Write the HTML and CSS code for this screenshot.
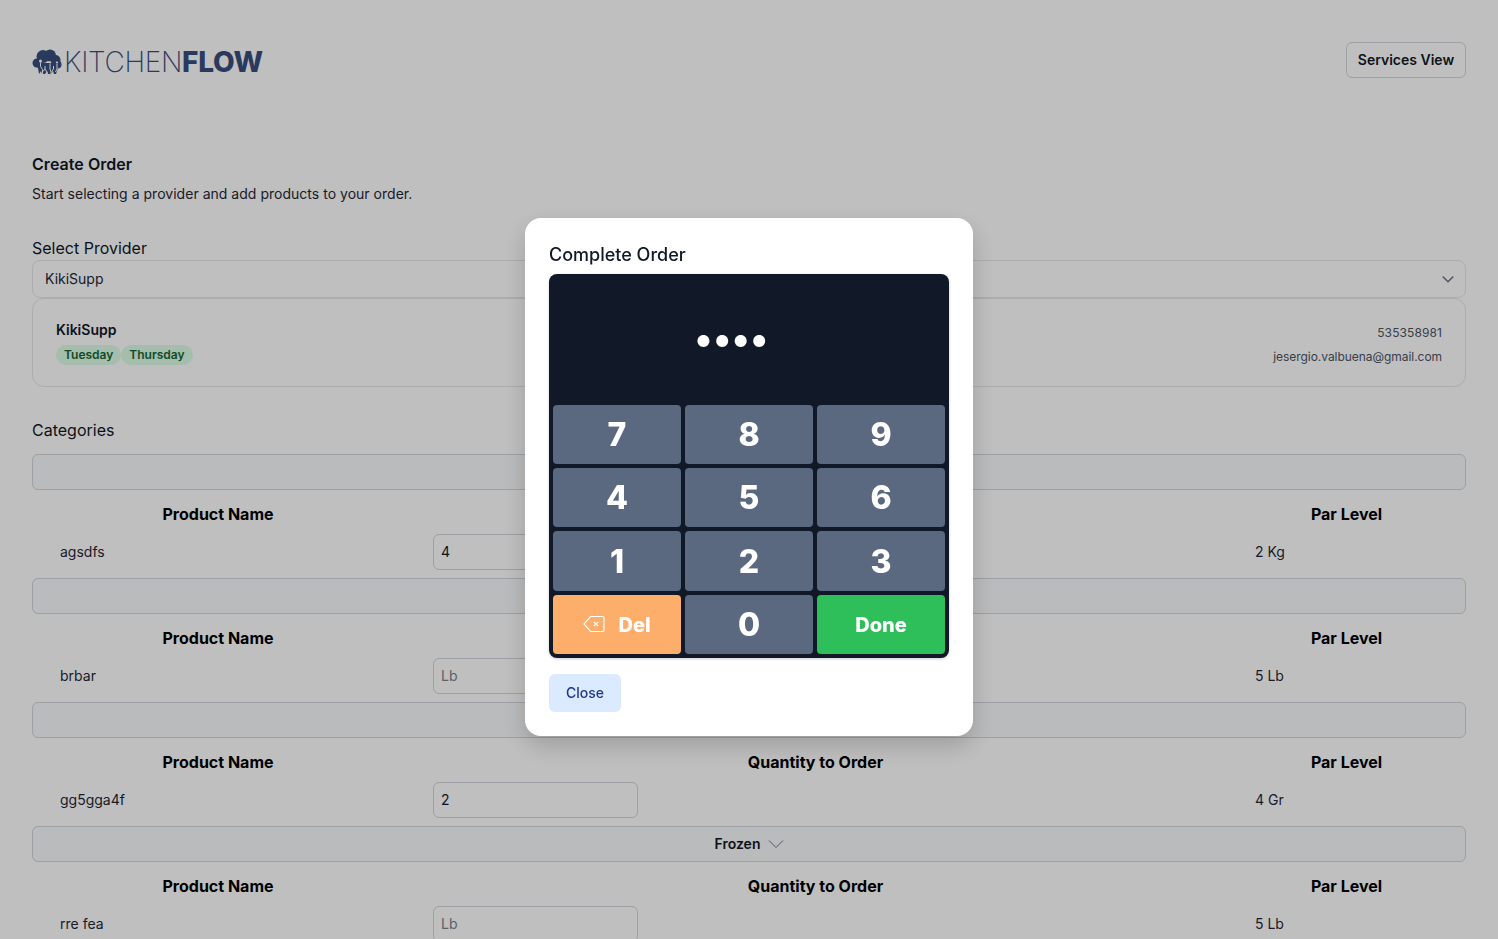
FILE: index.html
```html
<!DOCTYPE html>
<html lang="en">
<head>
<meta charset="utf-8">
<title>KitchenFlow - Create Order</title>
<link rel="stylesheet" href="styles.css">
</head>
<body>
<main class="page">
  <header class="topbar">
    <div class="logo">
      <svg class="logo-mark" viewBox="0 0 30 26" width="30" height="26" aria-hidden="true">
        <g class="logo-cloud">
          <circle cx="5" cy="14" r="4.500"/>
          <circle cx="11" cy="7.500" r="6.500"/>
          <circle cx="18" cy="6.500" r="6"/>
          <circle cx="23.500" cy="11" r="5"/>
          <circle cx="25.500" cy="15.500" r="4"/>
          <path d="M4 14h22v5l-2 6h-2l-1-3-2 3h-3l-1-3-2 3h-3l-1-3-2 3H7l-1-6-2-1z"/>
        </g>
        <path class="logo-lines" d="M8.500 13.500v4l2 3v5M13 17v3l-2 2.500M13 20l2 3v2.500M18 15v5l1 3v2.500M21.500 17v3l-2 3M25 15v5l-1.500 3"/>
        <circle class="logo-node" cx="8.500" cy="12" r="1.500"/>
        <circle class="logo-node" cx="18" cy="13.500" r="1.100"/>
        <circle class="logo-node" cx="25" cy="13.500" r="1.100"/>
      </svg>
      <span class="logo-text"><span class="logo-thin">KITCHEN</span><span class="logo-bold">FLOW</span></span>
    </div>
    <button class="btn-outline" type="button">Services View</button>
  </header>

  <section class="intro">
    <h1>Create Order</h1>
    <p>Start selecting a provider and add products to your order.</p>
  </section>

  <section class="provider">
    <label class="field-label" for="provider">Select Provider</label>
    <div class="select" id="provider">
      <span>KikiSupp</span>
      <svg viewBox="0 0 20 20" width="20" height="20" aria-hidden="true"><path d="M4.700 7.500l5.300 5.300 5.300-5.300"/></svg>
    </div>
    <div class="provider-card">
      <div>
        <div class="provider-name">KikiSupp</div>
        <div class="tags"><span class="tag">Tuesday</span><span class="tag">Thursday</span></div>
      </div>
      <div class="contact">
        <div class="phone">535358981</div>
        <div>jesergio.valbuena@gmail.com</div>
      </div>
    </div>
  </section>

  <h2 class="field-label categories-title">Categories</h2>

  <section class="category">
    <div class="cat-bar"></div>
    <div class="cols head"><div>Product Name</div><div>Quantity to Order</div><div>Par Level</div></div>
    <div class="cols row"><div>agsdfs</div><div><input class="qty" type="text" value="4" placeholder="Kg"></div><div>2 Kg</div></div>
  </section>
  <section class="category">
    <div class="cat-bar"></div>
    <div class="cols head"><div>Product Name</div><div>Quantity to Order</div><div>Par Level</div></div>
    <div class="cols row"><div>brbar</div><div><input class="qty" type="text" placeholder="Lb"></div><div>5 Lb</div></div>
  </section>
  <section class="category">
    <div class="cat-bar"></div>
    <div class="cols head"><div>Product Name</div><div>Quantity to Order</div><div>Par Level</div></div>
    <div class="cols row"><div>gg5gga4f</div><div><input class="qty" type="text" value="2" placeholder="Gr"></div><div>4 Gr</div></div>
  </section>
  <section class="category">
    <div class="cat-bar"><span>Frozen</span>
      <svg viewBox="0 0 16 10" width="16" height="10" aria-hidden="true"><path d="M1 1.500l7 7 7-7"/></svg>
    </div>
    <div class="cols head"><div>Product Name</div><div>Quantity to Order</div><div>Par Level</div></div>
    <div class="cols row"><div>rre fea</div><div><input class="qty" type="text" placeholder="Lb"></div><div>5 Lb</div></div>
  </section>
</main>

<div class="overlay">
  <div class="modal" role="dialog" aria-label="Complete Order">
    <h3>Complete Order</h3>
    <div class="pad">
      <div class="display"><span class="dots">••••</span></div>
      <div class="keys">
        <button class="key" type="button">7</button>
        <button class="key" type="button">8</button>
        <button class="key" type="button">9</button>
        <button class="key" type="button">4</button>
        <button class="key" type="button">5</button>
        <button class="key" type="button">6</button>
        <button class="key" type="button">1</button>
        <button class="key" type="button">2</button>
        <button class="key" type="button">3</button>
        <button class="key key-del" type="button">
          <svg viewBox="0 0 22 18" width="22" height="18" aria-hidden="true"><path d="M7.500 1.500H19.500a1.500 1.500 0 0 1 1.500 1.500v12a1.500 1.500 0 0 1-1.500 1.500H7.500L1 9zM10.800 6.800l4.400 4.400M15.200 6.800l-4.400 4.400"/></svg>
          <span>Del</span>
        </button>
        <button class="key" type="button">0</button>
        <button class="key key-done" type="button">Done</button>
      </div>
    </div>
    <button class="btn-close" type="button">Close</button>
  </div>
</div>
</body>
</html>
```
FILE: styles.css
```css
* { box-sizing: border-box; }
html, body { margin: 0; height: 100%; overflow: hidden; }
body { background: #fff; color: #111827; font-family: Inter, "Liberation Sans", sans-serif; font-size: 14px; }
.page { padding: 42px 32px 0; height: 939px; overflow: hidden; }
.topbar { display: flex; justify-content: space-between; align-items: flex-start; height: 36px; }
.logo { display: flex; align-items: center; gap: 2px; height: 40px; }
.logo-mark { display: block; }
.logo-cloud { fill: #394e7e; }
.logo-lines { fill: none; stroke: #fff; stroke-width: 1; }
.logo-node { fill: #fff; }
.logo-text { font-size: 28px; line-height: 40px; color: #394e7e; white-space: nowrap; }
.logo-thin { font-weight: 200; letter-spacing: -0.3px; }
.logo-bold { font-weight: 800; letter-spacing: -0.2px; }
.btn-outline { height: 36px; width: 120px; border: 1px solid #d1d5db; border-radius: 6px; background: #fff; color: #111827; font: 600 14px/20px Inter, sans-serif; padding: 0; }
.intro { margin-top: 76px; }
.intro h1 { margin: 0; font-size: 16px; line-height: 20px; font-weight: 600; letter-spacing: 0.05px; }
.intro p { margin: 10px 0 0; font-size: 14px; line-height: 20px; color: #1f2937; letter-spacing: 0.02px; }
.provider { margin-top: 34px; }
.field-label { display: block; margin: 0; font-size: 16px; line-height: 20px; font-weight: 400; color: #111827; }
.select { display: flex; justify-content: space-between; align-items: center; height: 38px; margin-top: 2px; padding: 0 7px 2px 12px; border: 1px solid #e5e7eb; border-radius: 8px; background: #fff; color: #1f2937; }
.select svg { fill: none; stroke: #6b7280; stroke-width: 1.500; margin-top: 2px; }
.provider-card { display: flex; justify-content: space-between; align-items: center; height: 89px; padding: 0 23px; border: 1px solid #e5e7eb; border-radius: 12px; }
.provider-name { font-weight: 600; line-height: 20px; }
.tags { display: flex; margin-top: 5px; }
.tag { padding: 0 8px; border-radius: 10px; background: #dcfce7; color: #166534; font-size: 12px; line-height: 20px; font-weight: 600; }
.contact { padding-top: 4px; text-align: right; font-size: 12px; line-height: 24px; color: #4b5563; letter-spacing: -0.05px; }
.phone { letter-spacing: 0.1px; }
.categories-title { margin-top: 33px; }
.category { height: 124px; }
.categories-title + .category { margin-top: 14px; }
.cat-bar { display: flex; justify-content: center; align-items: center; gap: 8px; height: 36px; padding-bottom: 1px; border: 1px solid #d1d5db; border-radius: 6px; background: #f9fafb; font-weight: 600; }
.cat-bar span { margin-left: 1px; }
.cat-bar svg { fill: none; stroke: #6b7280; stroke-width: 1; }
.cols { display: grid; grid-template-columns: 372fr 823fr 239fr; }
.head { height: 36px; align-items: center; text-align: center; font-size: 16px; font-weight: 700; margin-top: 6px; color: #000; }
.row { height: 44px; align-items: center; padding-bottom: 6px; color: #1f2937; }
.row > div { padding-left: 28px; }
.row > div:nth-child(2) { padding-left: 29px; }
.qty { display: block; width: 205px; height: 36px; margin-top: 2px; padding: 0 7px 2px; border: 1px solid #d1d5db; border-radius: 6px; background: #fff; color: #111827; font: 14px Inter, sans-serif; }
.qty::placeholder { color: #7b818d; }
.overlay { position: fixed; inset: 0; display: flex; justify-content: center; align-items: flex-start; padding-top: 218px; background: rgba(0, 0, 0, 0.25); }
.modal { width: 448px; height: 518px; padding: 24px; background: #fff; border-radius: 16px; box-shadow: 0 10px 25px rgba(0, 0, 0, 0.18); }
.modal h3 { margin: 0 0 6px; font-size: 18px; line-height: 26px; font-weight: 500; color: #111827; }
.pad { height: 384px; padding: 0 4px 4px; background: #111827; border-radius: 8px; box-shadow: 0 1px 3px rgba(0, 0, 0, 0.2); }
.display { height: 131px; display: flex; align-items: center; justify-content: center; padding-right: 38px; }
.dots { color: #fff; font-size: 38px; line-height: 1; letter-spacing: -2.800px; margin-top: -3px; }
.keys { display: grid; grid-template-columns: repeat(3, 1fr); grid-template-rows: 59px 59px 60px 59px; gap: 4px; }
.key { display: flex; justify-content: center; align-items: center; gap: 13px; border: 0; border-radius: 4px; padding: 1px 0 0; background: #5a6980; color: #fff; font: 800 32px/1 Inter, sans-serif; }
.key-del { background: #fdae6b; font-size: 20px; }
.key-del svg { fill: none; stroke: #fff; stroke-width: 1.200; margin-top: -2px; }
.key-done { background: #2fbf5a; font-size: 20px; }
.btn-close { display: block; margin-top: 16px; width: 72px; height: 38px; padding: 0; border: 0; border-radius: 6px; background: #dbeafe; color: #1e3a8a; font: 500 14px/20px Inter, sans-serif; }
```
